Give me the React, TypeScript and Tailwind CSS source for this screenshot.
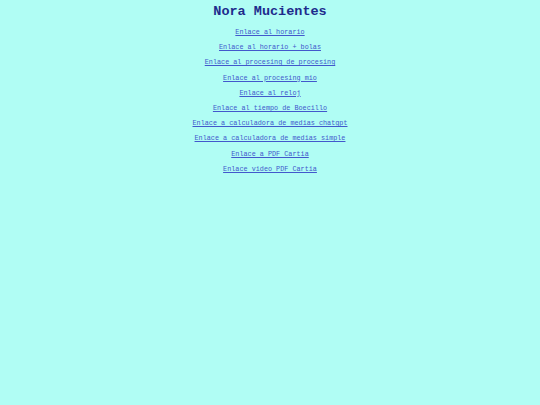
import React from 'react';

const links = [
  'Enlace al horario',
  'Enlace al horario + bolas',
  'Enlace al procesing de procesing',
  'Enlace al procesing mio',
  'Enlace al reloj',
  'Enlace al tiempo de Boecillo',
  'Enlace a calculadora de medias chatgpt',
  'Enlace a calculadora de medias simple',
  'Enlace a PDF Cartia',
  'Enlace video PDF Cartia',
];

export default function App() {
  return (
    <div className="min-h-screen w-full bg-[#b0fdf4] font-['Liberation_Mono',monospace] flex flex-col items-center">
      <h1 className="mt-[4px] text-[13.5px] leading-[16px] font-bold text-[#1e2b8c]">Nora Mucientes</h1>
      <ul className="mt-[8px] flex flex-col items-center gap-[6.2px]">
        {links.map((l) => (
          <li key={l} className="text-[6.8px] leading-[9px]">
            <a href="#" className="text-[#4258cc] underline">{l}</a>
          </li>
        ))}
      </ul>
    </div>
  );
}
